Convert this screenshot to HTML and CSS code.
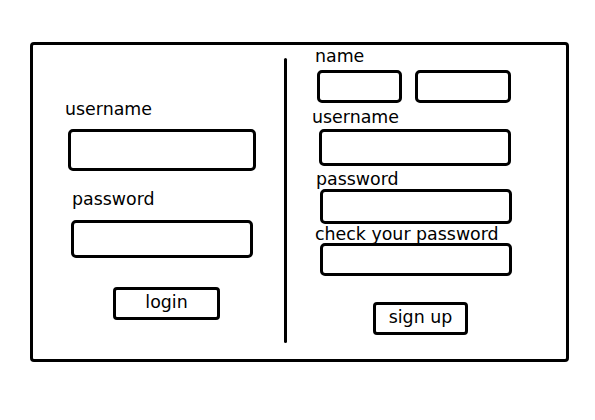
FILE: index.html
```html
<!DOCTYPE html>
<html>
<head>
<meta charset="utf-8">
<link rel="stylesheet" href="styles.css">
</head>
<body>
<div class="frame">
  <div class="panel panel-login">
    <div class="label l-user">username</div>
    <div class="box b-user"></div>
    <div class="label l-pass">password</div>
    <div class="box b-pass"></div>
    <div class="btn btn-login">login</div>
  </div>
  <div class="divider"></div>
  <div class="panel panel-signup">
    <div class="label s-name">name</div>
    <div class="name-row">
      <div class="box b-first"></div>
      <div class="box b-last"></div>
    </div>
    <div class="label s-user">username</div>
    <div class="box sb-user"></div>
    <div class="label s-pass">password</div>
    <div class="box sb-pass"></div>
    <div class="label s-check">check your password</div>
    <div class="box sb-check"></div>
    <div class="btn btn-signup">sign up</div>
  </div>
</div>
</body>
</html>
```
FILE: styles.css
```css
html, body {
  margin: 0;
  padding: 0;
  background: #ffffff;
}
body {
  font-family: "DejaVu Sans", Verdana, sans-serif;
  color: #000;
  font-size: 17.4px;
}
.frame {
  box-sizing: border-box;
  margin: 42px 0 0 30px;
  width: 539px;
  height: 320px;
  border: 3px solid #000;
  border-radius: 4px;
  display: flex;
  align-items: flex-start;
}
.panel {
  display: flex;
  flex-direction: column;
  align-items: flex-start;
}
.panel-login {
  width: 251px;
  padding-top: 54px;
}
.divider {
  width: 3px;
  height: 285px;
  margin-top: 13px;
  background: #000;
  border-radius: 2px;
}
.panel-signup {
  padding-top: 1px;
}
.label {
  line-height: 20px;
  white-space: nowrap;
}
.box {
  box-sizing: border-box;
  border: 3px solid #000;
  border-radius: 5px;
}
.btn {
  box-sizing: border-box;
  border: 3px solid #000;
  border-radius: 4px;
  display: flex;
  align-items: center;
  justify-content: center;
  line-height: 20px;
}

/* login side */
.l-user { margin-left: 32px; }
.b-user { margin: 10px 0 0 35px; width: 188px; height: 42px; }
.l-pass { margin: 18px 0 0 39px; }
.b-pass { margin: 11px 0 0 38px; width: 182px; height: 38px; }
.btn-login { margin: 29px 0 0 80px; width: 107px; height: 33px; padding-bottom: 3px; }

/* signup side */
.s-name { margin-left: 28px; }
.name-row { display: flex; gap: 13px; margin: 4px 0 0 30px; }
.b-first { width: 85px; height: 33px; }
.b-last { width: 96px; height: 33px; }
.s-user { margin: 4px 0 0 25px; }
.sb-user { margin: 2px 0 0 32px; width: 192px; height: 37px; }
.s-pass { margin: 3px 0 0 29px; }
.sb-pass { margin: 0 0 0 33px; width: 192px; height: 35px; }
.s-check { margin: 0 0 0 28px; }
.sb-check { margin: -1px 0 0 33px; width: 192px; height: 33px; }
.btn-signup { margin: 26px 0 0 86px; width: 95px; height: 33px; padding-bottom: 3px; }
```
